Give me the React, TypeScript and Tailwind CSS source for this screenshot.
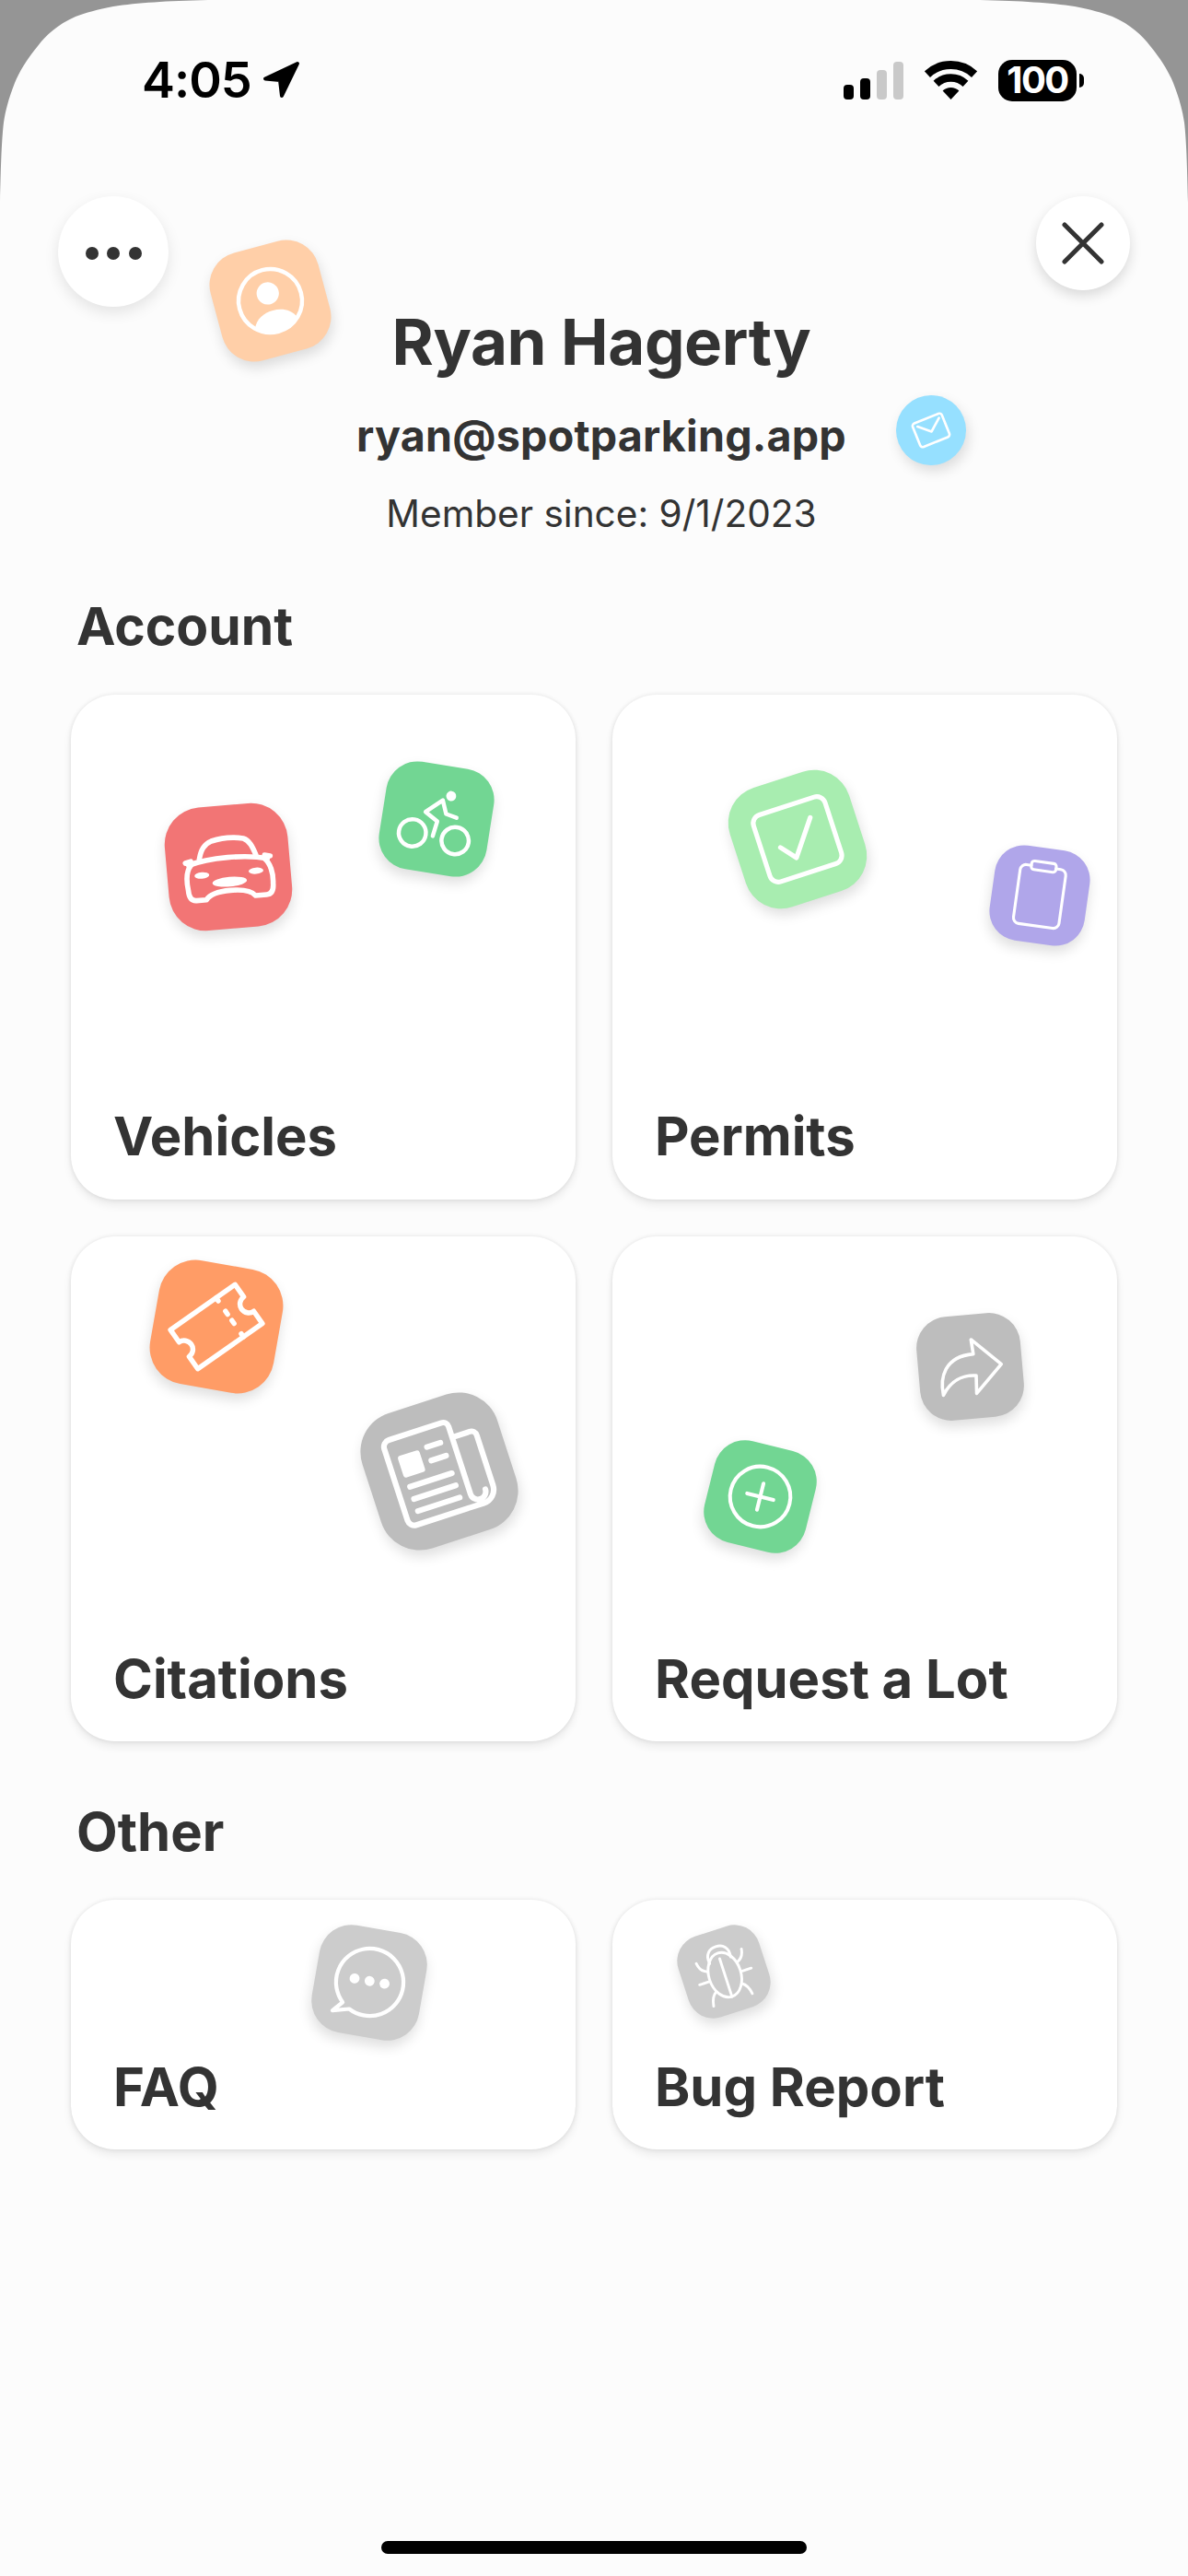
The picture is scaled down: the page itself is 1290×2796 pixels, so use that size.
import React from "react";

function Tile({ cls, sw = 3.5, children }: { cls: string; sw?: number; children: React.ReactNode }) {
  return (
    <div className={"absolute shadow-[0_7px_14px_rgba(0,0,0,0.13)] " + cls}>
      <svg viewBox="0 0 100 100" className="w-full h-full" fill="none" stroke="#fff" strokeWidth={sw} strokeLinecap="round" strokeLinejoin="round">
        {children}
      </svg>
    </div>
  );
}

function Card({ label, cls, children }: { label: string; cls: string; children?: React.ReactNode }) {
  return (
    <div className={"relative flex flex-col justify-end bg-white rounded-[48px] w-[548px] pl-[46px] shadow-[0_0_5px_rgba(0,0,0,0.1),0_6px_10px_rgba(0,0,0,0.07)] " + cls}>
      {children}
      <div className="text-[58px] leading-[70px] font-bold text-[#333333]">{label}</div>
    </div>
  );
}

function Corner({ cls }: { cls: string }) {
  return (
    <svg viewBox="0 0 230 230" className={"absolute top-0 w-[230px] h-[230px] " + cls}>
      <path
        fill="#959595"
        d="M0 0 L226 0 C180 1 150 3 123 7 C106 10 93 14 82 18 C62 27 50 38 41 50 C28 66 21 78 16 90 C9 108 6 120 4 133 C2 150 1 175 0 220 Z"
      />
    </svg>
  );
}

const dot = { fill: "#fff", stroke: "none" } as const;

export default function App() {
  return (
    <div className="relative w-[1290px] h-[2796px] bg-[#fcfcfc] font-['Inter',sans-serif] overflow-hidden flex flex-col">
      <Corner cls="left-0" />
      <Corner cls="right-0 -scale-x-100" />

      {/* Status bar */}
      <div className="relative h-[174px] flex items-center justify-between pl-[154px] pr-[113px]">
        <div className="flex items-center gap-[12px]">
          <span className="text-[54px] leading-[60px] font-semibold text-black tracking-[-1px]">4:05</span>
          <svg viewBox="0 0 42 42" className="w-[42px] h-[42px]">
            <path d="M38 3 L3 19.5 L19 21 L21 38 Z" fill="#000" stroke="#000" strokeWidth="4" strokeLinejoin="round" />
          </svg>
        </div>
        <div className="flex items-center gap-[23px]">
          <div className="flex items-end gap-[7px] h-[41px]">
            <div className="w-[11px] h-[16px] rounded-[4px] bg-black" />
            <div className="w-[11px] h-[23px] rounded-[4px] bg-black" />
            <div className="w-[11px] h-[32px] rounded-[4px] bg-[#c9c9c9]" />
            <div className="w-[11px] h-[41px] rounded-[4px] bg-[#c9c9c9]" />
          </div>
          <svg viewBox="0 0 57 42" className="w-[57px] h-[42px]" fill="none" stroke="#000">
            <path d="M2.9 14.6 A37.5 37.5 0 0 1 54.1 14.6" strokeWidth="9" />
            <path d="M12.5 24.8 A23.5 23.5 0 0 1 44.5 24.8" strokeWidth="8.5" />
            <path d="M28.5 42 L19.6 32.5 A13 13 0 0 1 37.4 32.5 Z" fill="#000" stroke="none" />
          </svg>
          <div className="flex items-center gap-[3px]">
            <div className="w-[85px] h-[45px] rounded-[15px] bg-black flex items-center justify-center text-white text-[40px] leading-none font-bold tracking-[-1.5px]">100</div>
            <div className="w-[5px] h-[15px] rounded-r-[5px] bg-black" />
          </div>
        </div>
      </div>

      {/* Overlay buttons and floating header icons */}
      <button className="absolute left-[63px] top-[213px] w-[120px] h-[120px] pt-[4px] rounded-full bg-white shadow-[0_6px_16px_rgba(0,0,0,0.1)] flex items-center justify-center gap-[9.5px]">
        <span className="w-[14px] h-[14px] rounded-full bg-[#333333]" />
        <span className="w-[14px] h-[14px] rounded-full bg-[#333333]" />
        <span className="w-[14px] h-[14px] rounded-full bg-[#333333]" />
      </button>
      <button className="absolute left-[1125px] top-[213px] w-[102px] h-[102px] rounded-full bg-white shadow-[0_6px_14px_rgba(0,0,0,0.14)] flex items-center justify-center">
        <svg viewBox="0 0 46 46" className="w-[46px] h-[46px]" fill="none" stroke="#333333" strokeWidth="5" strokeLinecap="round">
          <path d="M3 3 L43 43 M43 3 L3 43" />
        </svg>
      </button>
      <Tile cls="left-[233px] top-[266px] w-[121px] h-[121px] rounded-[36px] bg-[#ffcfa8] -rotate-[15deg]" sw={3.7}>
        <circle cx="50" cy="50" r="28.5" />
        <circle cx="49.5" cy="43" r="10" {...dot} />
        <path d="M30 71 C34 62 42 59 50 59 C58 59 66 62 70 71 A29 29 0 0 1 30 71 Z" {...dot} />
      </Tile>
      <Tile cls="left-[973px] top-[429px] w-[76px] h-[76px] rounded-full bg-[#96e0ff] -rotate-[22deg]" sw={3.5}>
        <rect x="27.5" y="32" width="45" height="36" rx="4" />
        <path d="M34 38 L50 52 L67 38" />
      </Tile>

      {/* Profile header */}
      <div className="flex flex-col items-center pt-[157px] pl-[16px] text-[#333333]">
        <div className="text-[69px] leading-[80px] font-bold tracking-[-0.4px]">Ryan Hagerty</div>
        <div className="mt-[32px] text-[46.6px] leading-[60px] font-bold tracking-[0.2px]">ryan@spotparking.app</div>
        <div className="mt-[30px] text-[40.6px] leading-[50px] font-normal">Member since: 9/1/2023</div>
      </div>

      {/* Account */}
      <div className="ml-[83px] mt-[67px] text-[57px] leading-[60px] font-bold text-[#333333]">Account</div>
      <div className="ml-[77px] mt-[44px] grid grid-cols-[548px_548px] gap-x-[40px] gap-y-[40px]">
        <Card label="Vehicles" cls="h-[548px] pb-[34px]">
          <Tile cls="left-[104px] top-[120px] w-[134px] h-[134px] rounded-[40px] bg-[#f27575] -rotate-[5deg]" sw={4.2}>
            <path d="M27 42 C29 34 32 30 38 28 C46 26 56 26 64 28 C69 30 71 36 73 42" />
            <path d="M18 46 C35 41 65 41 82 46" />
            <path d="M20 46 C16 50 15 58 16 66 C16 72 18 75 22 75 L30 75 C33 71 40 69 50 69 C60 69 67 71 70 75 L79 75 C83 75 85 72 85 66 C86 58 84 50 80 46" />
            <path d="M15.5 44 L20 43 M84.5 44 L80 43" />
            <ellipse cx="28" cy="55" rx="6" ry="2.6" {...dot} />
            <ellipse cx="72" cy="55" rx="6" ry="2.6" {...dot} />
            <ellipse cx="50" cy="62" rx="14" ry="4" {...dot} />
          </Tile>
          <Tile cls="left-[338px] top-[76px] w-[118px] h-[118px] rounded-[34px] bg-[#72d693] rotate-[9deg]" sw={3.8}>
            <circle cx="30" cy="66" r="12.5" />
            <circle cx="70" cy="67" r="12.5" />
            <circle cx="60" cy="27" r="4.6" {...dot} />
            <path d="M49 66 L51 52 L39 45 L53 32 L58 44 L68 46" />
          </Tile>
        </Card>
        <Card label="Permits" cls="h-[548px] pb-[34px]">
          <Tile cls="left-[133px] top-[89px] w-[136px] h-[136px] rounded-[40px] bg-[#a8edb0] -rotate-[18deg]" sw={3.8}>
            <rect x="20" y="22" width="60" height="56" rx="7" />
            <path d="M35 52 L44.7 63.7 L65 36.6" />
          </Tile>
          <Tile cls="left-[412px] top-[166px] w-[104px] h-[104px] rounded-[32px] bg-[#b0a6ea] rotate-[8deg]" sw={3}>
            <path d="M37 20 H32 a6 6 0 0 0 -6 6 V76 a6 6 0 0 0 6 6 H68 a6 6 0 0 0 6 -6 V26 a6 6 0 0 0 -6 -6 H63" />
            <rect x="37" y="15" width="26" height="9" rx="3" />
          </Tile>
        </Card>
        <Card label="Citations" cls="h-[548px] pb-[33px]">
          <Tile cls="left-[90px] top-[30px] w-[136px] h-[136px] rounded-[40px] bg-[#ff9c66] rotate-[10deg]" sw={4}>
            <g transform="rotate(-45 50 50)">
              <path d="M18.5 31 H81.5 V43 A7 7 0 0 0 81.5 57 V69 H18.5 V57 A7 7 0 0 0 18.5 43 Z" />
              <path d="M63 31 v3 M63 44 v3 M63 53 v3 M63 66 v3" />
            </g>
          </Tile>
          <Tile cls="left-[323px] top-[178px] w-[154px] h-[154px] rounded-[44px] bg-[#bdbdbd] -rotate-[18deg]" sw={4}>
            <path d="M66 30 H79 a4 4 0 0 1 4 4 V71 a10 10 0 0 1 -10 10 H23 a5 5 0 0 1 -5 -5 V23 a5 5 0 0 1 5 -5 H62 a4 4 0 0 1 4 4 V72 a5.5 5.5 0 0 0 11 0" />
            <rect x="25" y="31" width="16" height="16" rx="2" {...dot} />
            <path d="M47 31 H57 M47 41 H58 M27 54 H58 M27 63 H58 M27 72 H58" />
          </Tile>
        </Card>
        <Card label="Request a Lot" cls="h-[548px] pb-[33px]">
          <Tile cls="left-[332px] top-[85px] w-[113px] h-[113px] rounded-[34px] bg-[#bdbdbd] -rotate-[5deg]" sw={3.2}>
            <path d="M53 24 L80 50 L54 76 L55 59 C42 57 30 62 22 75 C20 58 26 38 54 38 Z" />
          </Tile>
          <Tile cls="left-[104px] top-[226px] w-[113px] h-[113px] rounded-[34px] bg-[#72d693] rotate-[14deg]" sw={3.6}>
            <circle cx="50" cy="50" r="29" />
            <path d="M37 50 H63 M50 37 V63" />
          </Tile>
        </Card>
      </div>

      {/* Other */}
      <div className="ml-[83px] mt-[68px] text-[58px] leading-[60px] font-bold text-[#333333]">Other</div>
      <div className="ml-[77px] mt-[44px] grid grid-cols-[548px_548px] gap-x-[40px]">
        <Card label="FAQ" cls="h-[271px] pb-[33px]">
          <Tile cls="left-[265px] top-[31px] w-[118px] h-[118px] rounded-[35px] bg-[#cccccc] rotate-[10deg]" sw={3.6}>
            <path d="M29 72 L21 81 L36 77 A31 31 0 1 0 29 72 Z" />
            <circle cx="36" cy="48.5" r="4.6" {...dot} />
            <circle cx="50" cy="48.5" r="4.6" {...dot} />
            <circle cx="64" cy="48.5" r="4.6" {...dot} />
          </Tile>
        </Card>
        <Card label="Bug Report" cls="h-[271px] pb-[33px]">
          <Tile cls="left-[75px] top-[32px] w-[92px] h-[92px] rounded-[28px] bg-[#cccccc] -rotate-[18deg]" sw={3.2}>
            <ellipse cx="50" cy="54" rx="19" ry="27" />
            <path d="M37 36 C35 24 42 19 50 19 C58 19 65 24 63 36" />
            <path d="M50 34 V81" />
            <path d="M31 44 C26 42 23 38 22 31 M69 44 C74 42 77 38 78 31" />
            <path d="M30 56 H18 M70 56 H82" />
            <path d="M34 70 C29 73 27 78 26 85 M66 70 C71 73 73 78 74 85" />
          </Tile>
        </Card>
      </div>

      {/* Home indicator */}
      <div className="mt-auto mb-[24px] self-center w-[462px] h-[14px] rounded-full bg-black" />
    </div>
  );
}
